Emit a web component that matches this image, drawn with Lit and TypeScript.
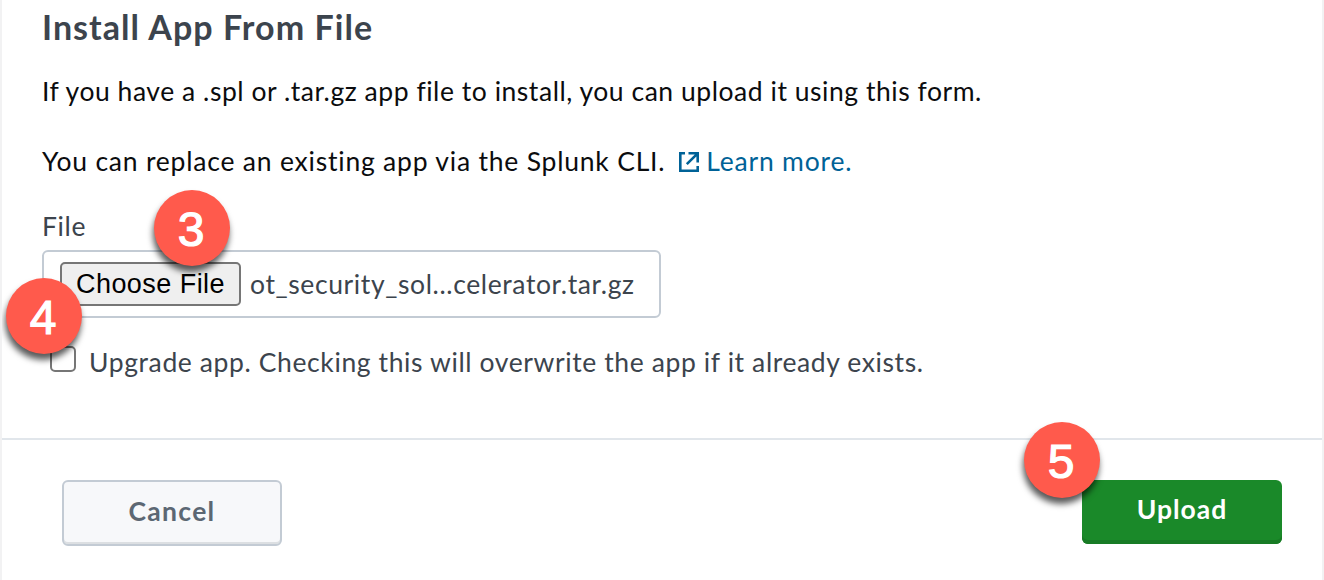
import { LitElement, html, css } from "lit";
import { customElement, property } from "lit/decorators.js";

@customElement("step-badge")
class StepBadge extends LitElement {
  @property() label = "";
  static styles = css`
    :host {
      position: absolute;
      display: flex;
      justify-content: center;
      width: 76px;
      height: 76px;
      border-radius: 50%;
      background: #ff5a4c;
      box-shadow: -1px 6px 6px rgba(0, 0, 0, 0.65);
      color: #fff;
      font: 400 48px/80px "Liberation Sans", sans-serif;
      letter-spacing: 0;
      -webkit-text-stroke: 1.2px #fff;
      z-index: 2;
    }
    span {
      margin-right: 2px;
    }
  `;
  render() {
    return html`<span>${this.label}</span>`;
  }
}

@customElement("app-root")
class AppRoot extends LitElement {
  static styles = css`
    :host {
      display: block;
      box-sizing: border-box;
      height: 580px;
      overflow: hidden;
      border: solid #f2f2f3;
      border-width: 0 2px;
      background: #fff;
      color: #3c444d;
      font: 26.5px/36px Lato, sans-serif;
      letter-spacing: 0.61px;
    }
    .content {
      display: flex;
      flex-direction: column;
      align-items: flex-start;
      box-sizing: border-box;
      height: 440px;
      padding: 7px 40px 0;
      border-bottom: 2px solid #e1e6eb;
      white-space: nowrap;
    }
    .title {
      margin: 0 0 26px;
      font-size: 34px;
      line-height: 40px;
      font-weight: 700;
      letter-spacing: 1.05px;
    }
    .para {
      margin: 0 0 34px;
      color: #0b0c0e;
      letter-spacing: 0.54px;
    }
    .replace {
      display: flex;
      margin-bottom: 31px;
      letter-spacing: 0.79px;
    }
    .link {
      display: flex;
      align-items: center;
      gap: 7px;
      margin-left: 14px;
      color: #006297;
      text-decoration: none;
    }
    .link svg {
      display: block;
      margin-top: 2px;
    }
    .label {
      line-height: 32px;
      margin-bottom: 8px;
    }
    .file {
      position: relative;
      display: flex;
      align-items: center;
      box-sizing: border-box;
      width: 619px;
      height: 68px;
      padding: 0 16px;
      gap: 9px;
      border: 2px solid #c3cbd4;
      border-radius: 6px;
      margin-bottom: 28px;
    }
    .choose {
      box-sizing: border-box;
      width: 181px;
      height: 44px;
      padding: 0;
      border: 2px solid #767676;
      border-radius: 5px;
      background: #efefef;
      color: #000;
      font: 27px/38px "Liberation Sans", sans-serif;
      letter-spacing: 0.45px;
    }
    .upgrade {
      display: flex;
      gap: 13px;
      padding-left: 8px;
      line-height: 33px;
    }
    .check {
      appearance: none;
      box-sizing: border-box;
      width: 26px;
      height: 26px;
      margin: 0;
      border: 2px solid #767676;
      border-radius: 5px;
      background: #fff;
    }
    .footer {
      display: flex;
      justify-content: space-between;
      align-items: flex-start;
      padding: 40px 40px 0 60px;
    }
    .btn {
      box-sizing: border-box;
      border-radius: 6px;
      font: 700 26.5px/58px Lato, sans-serif;
      letter-spacing: 1.3px;
    }
    .cancel {
      width: 220px;
      height: 66px;
      padding: 0 0 4px;
      border: 2px solid #c3cbd4;
      background: #f7f8fa;
      box-shadow: inset 0 -2px #dcdfe2;
      color: #5c6773;
    }
    .primary {
      position: relative;
      width: 200px;
      height: 64px;
      padding: 0 0 6px;
      border: 0;
      background: #1a8929;
      box-shadow: inset 0 -4px #187b25;
      color: #fff;
      letter-spacing: 1px;
    }
    .three { left: 110px; top: -62px; }
    .four { left: -38px; top: 26px; }
    .five { left: -58px; top: -58px; }
  `;
  render() {
    return html`
      <section class="content">
        <h1 class="title">Install App From File</h1>
        <p class="para">If you have a .spl or .tar.gz app file to install, you can upload it using this form.</p>
        <p class="para replace">
          <span>You can replace an existing app via the Splunk CLI.</span>
          <a class="link">
            <svg width="20" height="20" viewBox="0 0 20 20" fill="none" stroke="currentColor" stroke-width="2.6">
              <path d="M6 1.3H1.3V18.7H18.7V14M9.5 1.3H18.7V10.5M18.2 1.8L7.8 12.2" />
            </svg>
            <span>Learn more.</span>
          </a>
        </p>
        <div class="label">File</div>
        <div class="file">
          <button class="choose">Choose File</button>
          <span>ot_security_sol...celerator.tar.gz</span>
          <step-badge class="three" label="3"></step-badge>
          <step-badge class="four" label="4"></step-badge>
        </div>
        <label class="upgrade">
          <input class="check" type="checkbox" />
          <span>Upgrade app. Checking this will overwrite the app if it already exists.</span>
        </label>
      </section>
      <footer class="footer">
        <button class="btn cancel">Cancel</button>
        <button class="btn primary">Upload<step-badge class="five" label="5"></step-badge></button>
      </footer>
    `;
  }
}
